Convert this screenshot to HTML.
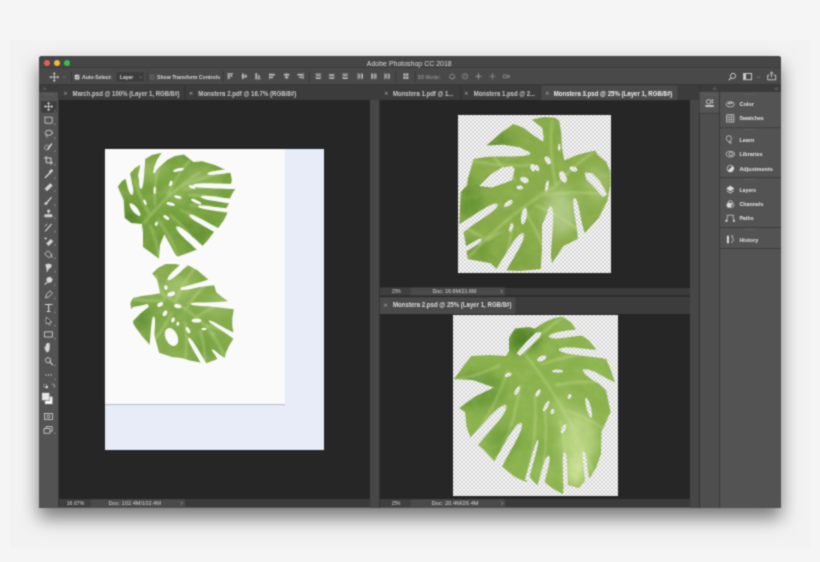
<!DOCTYPE html>
<html><head><meta charset="utf-8">
<style>
*{margin:0;padding:0;box-sizing:border-box}
html,body{width:820px;height:562px;overflow:hidden;background:#f5f5f5;font-family:"Liberation Sans",sans-serif}
.abs{position:absolute}
#bgrect{left:10px;top:40px;width:800px;height:508px;background:#f2f2f2}
#win{left:39px;top:56px;width:742px;height:452px;background:#535353;border-radius:3px 3px 0 0;box-shadow:0 10px 18px rgba(0,0,0,0.5);overflow:hidden}
#title{left:0;top:0;width:742px;height:12px;background:#464646;border-bottom:1px solid #3c3c3c}
#title .t{left:0;top:2px;width:742px;text-align:center;color:#d6d6d6;font-size:7.2px;line-height:9px}
.light{width:5.8px;height:5.8px;border-radius:50%;top:4.4px;box-shadow:0 0 0.6px rgba(0,0,0,0.4)}
#opt{left:0;top:12px;width:742px;height:17px;background:#494949;border-bottom:1.5px solid #383838}
.txt{color:#cfcfcf;font-size:5.6px;line-height:7px;white-space:nowrap}
.sep{width:1px;background:#3a3a3a}
#hdrL{left:0;top:29px;width:20px;height:7px;background:#3b3b3b}
#tools{left:0;top:36px;width:20px;height:415px;background:#535353;border-right:1px solid #3a3a3a}
.doc{background:#262626}
.tabbar{background:#3c3c3c}
.checker{background-color:#f7f7f7;background-image:linear-gradient(45deg,#d5d5d5 25%,transparent 25%,transparent 75%,#d5d5d5 75%),linear-gradient(45deg,#d5d5d5 25%,transparent 25%,transparent 75%,#d5d5d5 75%);background-size:4px 4px;background-position:0 0,2px 2px}
.status{background:#3a3a3a}
</style></head><body>
<svg width="0" height="0" style="position:absolute"><defs><filter id="conv" x="0" y="0" width="100%" height="100%" color-interpolation-filters="sRGB"><feConvolveMatrix order="3" kernelMatrix="1 2 1 2 8 2 1 2 1" divisor="20" edgeMode="duplicate" preserveAlpha="true"/></filter></defs></svg>
<div id="all" class="abs" style="left:0;top:0;width:820px;height:562px;background:#f5f5f5;filter:url(#conv)">
<div id="bgrect" class="abs"></div>
<div id="win" class="abs">
  <div id="title" class="abs">
    <div class="abs light" style="left:4.75px;background:#e2625b"></div>
    <div class="abs light" style="left:15px;background:#efbb40"></div>
    <div class="abs light" style="left:25.3px;background:#3cbf48"></div>
  </div>
  <div id="opt" class="abs"></div>
  <div id="hdrL" class="abs"></div>
  <div id="tools" class="abs"></div>
  <!-- left doc -->
  <div class="abs tabbar" style="left:20px;top:29px;width:321px;height:15px"></div>
  <div class="abs doc" style="left:20px;top:44px;width:311px;height:399.3px"></div>
  <div class="abs status" style="left:20px;top:443.3px;width:311px;height:8px"></div>
  <div class="abs" style="left:331px;top:44px;width:10px;height:408px;background:#474747;border-right:0.8px solid #333"></div>
  <!-- photo -->
  <div class="abs" style="left:66px;top:93px;width:219.3px;height:301.2px;background:#e8ecf9"></div>
  <div class="abs" style="left:66px;top:93px;width:179.8px;height:254.8px;background:#fafafa;box-shadow:0.3px 0.8px 0.6px #bdbdbd"></div>
  <!-- right top doc -->
  <div class="abs tabbar" style="left:341px;top:29px;width:310px;height:15px"></div>
  <div class="abs doc" style="left:341px;top:44px;width:310px;height:187.5px"></div>
  <div class="abs status" style="left:341px;top:231.5px;width:310px;height:8px"></div>
  <div class="abs" style="left:341px;top:239.4px;width:310px;height:1.9px;background:#2c2c2c"></div>
  <div class="abs tabbar" style="left:341px;top:241.3px;width:310px;height:16.7px"></div>
  <div class="abs doc" style="left:341px;top:258px;width:310px;height:185.3px"></div>
  <div class="abs status" style="left:341px;top:443.3px;width:310px;height:8px"></div>
  <div class="abs checker" style="left:419.3px;top:58.6px;width:153px;height:158.3px"></div>
  <div class="abs checker" style="left:414px;top:259.4px;width:164.7px;height:180.5px"></div>
  <!-- right scrollbar + panels -->
  <div class="abs tabbar" style="left:651px;top:29px;width:9px;height:15px"></div>
  <div class="abs" style="left:651px;top:44px;width:8.8px;height:408px;background:#474747"></div>
  <div class="abs" style="left:659.5px;top:29px;width:1px;height:423px;background:#333"></div>
  <div class="abs" style="left:660.5px;top:29px;width:19.5px;height:7px;background:#3b3b3b"></div>
  <div class="abs" style="left:660.5px;top:36px;width:19.5px;height:416px;background:#4e4e4e"></div>
  <div class="abs" style="left:679.8px;top:29px;width:1px;height:423px;background:#3a3a3a"></div>
  <div class="abs" style="left:680.8px;top:29px;width:61.2px;height:7px;background:#3b3b3b"></div>
  <div class="abs" style="left:680.8px;top:36px;width:61.2px;height:416px;background:#535353"></div>
</div>

<svg class="abs" style="left:0;top:0" width="820" height="562" viewBox="0 0 820 562" font-family="Liberation Sans, sans-serif"><defs><filter id="tsoft" x="0" y="0" width="820" height="562" filterUnits="userSpaceOnUse"><feGaussianBlur stdDeviation="0.38"/></filter></defs>
<g><!-- ===== options bar ===== -->
<g fill="none" stroke="#d4d4d4" stroke-width="0.9">
<path d="M54.3 72.8V81.4M50 77.1H58.6"/>
<path d="M53.2 74L54.3 72.6L55.4 74M53.2 80.2L54.3 81.6L55.4 80.2M51.2 76L49.8 77.1L51.2 78.2M57.4 76L58.8 77.1L57.4 78.2" stroke-width="0.8"/>
<path d="M63.1 76.7L64.3 77.9L65.5 76.7" stroke="#a0a0a0" stroke-width="0.6"/>
</g>
<rect x="74.8" y="74.8" width="4.6" height="4.6" rx="0.6" fill="#d6d6d6"/>
<path d="M75.8 77L76.9 78.1L78.5 75.8" stroke="#454545" stroke-width="0.8" fill="none"/>
<rect x="116.5" y="72.3" width="27.5" height="9.5" fill="#3d3d3d"/>
<path d="M139.3 76.7L140.5 77.9L141.7 76.7" stroke="#a0a0a0" stroke-width="0.6" fill="none"/>
<rect x="150.4" y="75.2" width="3.7" height="3.7" rx="0.5" stroke="#8a8a8a" stroke-width="0.6" fill="none"/>
<g fill="#d8d8d8" font-size="5.6" font-weight="bold">
<text x="82" y="79" textLength="30" lengthAdjust="spacingAndGlyphs">Auto-Select:</text>
<text x="119.8" y="79" textLength="13.5" lengthAdjust="spacingAndGlyphs">Layer</text>
<text x="157" y="79" textLength="63" lengthAdjust="spacingAndGlyphs">Show Transform Controls</text>
<text x="417.6" y="79" textLength="23" lengthAdjust="spacingAndGlyphs" fill="#8a8a8a">3D Mode:</text>
</g>
<g fill="#393939">
<rect x="71" y="71" width="0.9" height="11.5"/>
<rect x="146.8" y="71" width="0.9" height="11.5"/>
<rect x="222.8" y="71" width="0.9" height="11.5"/>
<rect x="308.8" y="71" width="0.9" height="11.5"/>
<rect x="395.3" y="71" width="0.9" height="11.5"/>
<rect x="414.8" y="71" width="0.9" height="11.5"/>
</g>
<g fill="#bcbcbd">
<rect x="227.2" y="73.2" width="6" height="0.7"/><rect x="227.79999999999998" y="73.7" width="1.8" height="5.4"/><rect x="230.6" y="73.7" width="1.6" height="3.2"/>
<rect x="241.4" y="75.85000000000001" width="6" height="0.7"/><rect x="242.0" y="73.5" width="1.8" height="5.4"/><rect x="244.8" y="74.60000000000001" width="1.6" height="3.2"/>
<rect x="254.8" y="78.60000000000001" width="6" height="0.7"/><rect x="255.4" y="73.2" width="1.8" height="5.4"/><rect x="258.2" y="75.4" width="1.6" height="3.2"/>
<rect x="269" y="73.2" width="0.7" height="6"/><rect x="269.5" y="73.8" width="5.4" height="1.8"/><rect x="269.5" y="76.60000000000001" width="3.6" height="1.6"/>
<rect x="286.25" y="73.2" width="0.7" height="6"/><rect x="283.90000000000003" y="73.8" width="5.4" height="1.8"/><rect x="284.8" y="76.60000000000001" width="3.6" height="1.6"/>
<rect x="302.9" y="73.2" width="0.7" height="6"/><rect x="297.5" y="73.8" width="5.4" height="1.8"/><rect x="299.3" y="76.60000000000001" width="3.6" height="1.6"/>
<rect x="315.3" y="73.60000000000001" width="6" height="0.7"/><rect x="315.90000000000003" y="74.60000000000001" width="4.8" height="1.2"/><rect x="315.3" y="76.8" width="6" height="0.7"/><rect x="315.90000000000003" y="77.8" width="4.8" height="1.2"/>
<rect x="328.7" y="73.9" width="6" height="0.7"/><rect x="329.3" y="74.9" width="4.8" height="1.2"/><rect x="328.7" y="77.10000000000001" width="6" height="0.7"/><rect x="329.3" y="77.9" width="4.8" height="1.0"/>
<rect x="342.1" y="73.60000000000001" width="6" height="0.7"/><rect x="342.70000000000005" y="74.60000000000001" width="4.8" height="1.2"/><rect x="342.1" y="76.8" width="6" height="0.7"/><rect x="342.70000000000005" y="77.8" width="4.8" height="1.2"/>
<rect x="357.59999999999997" y="73.2" width="0.7" height="6"/><rect x="358.59999999999997" y="73.8" width="1.2" height="4.8"/><rect x="360.8" y="73.2" width="0.7" height="6"/><rect x="361.8" y="73.8" width="1.2" height="4.8"/>
<rect x="371.09999999999997" y="73.2" width="0.7" height="6"/><rect x="372.09999999999997" y="73.8" width="1.2" height="4.8"/><rect x="374.3" y="73.2" width="0.7" height="6"/><rect x="375.3" y="73.8" width="1.2" height="4.8"/>
<rect x="384.4" y="73.2" width="0.7" height="6"/><rect x="385.4" y="73.8" width="1.2" height="4.8"/><rect x="387.6" y="73.2" width="0.7" height="6"/><rect x="388.6" y="73.8" width="1.2" height="4.8"/>
<rect x="403.4" y="73.4" width="2.2" height="2.4"/><rect x="406.2" y="73.4" width="2.2" height="2.4"/><rect x="403.4" y="76.6" width="2.2" height="2.4"/><rect x="406.2" y="76.6" width="2.2" height="2.4"/>
</g>
<g fill="none" stroke="#8a8a8a" stroke-width="0.9">
<circle cx="452.2" cy="76.5" r="2.4"/><path d="M449.5 77.5Q452 80 455 77.5"/>
<circle cx="465.1" cy="76.3" r="2.6"/><path d="M463.8 75.2l1.3 1.3l1.3-1.3"/>
<path d="M478.5 73v6.6M475.2 76.3h6.6"/><circle cx="478.5" cy="76.3" r="1.2"/>
<path d="M492.4 73.3v6M489.4 76.3h6"/>
<path d="M503.2 75h4v2.8h-4zM507.2 76.4l2-1.4v2.8z"/>
</g>
<g fill="none" stroke="#d0d0d0" stroke-width="0.9">
<circle cx="733" cy="75.9" r="2.6"/><path d="M731.1 77.8L728.8 80.1" stroke-width="1.1"/>
<rect x="743.6" y="73.5" width="8" height="6.2"/>
<path d="M757.6 76.6l1.1 1.1l1.1-1.1" stroke="#a8a8a8" stroke-width="0.6"/>
<path d="M769.5 75.2h-1.8v4.6h8v-4.6h-1.8M771.6 77.3v-5.2M769.9 73.7l1.7-1.7l1.7 1.7"/>
</g>
<rect x="744" y="73.9" width="2" height="5.4" fill="#d0d0d0"/>
<!-- ===== title ===== -->
<text x="366.8" y="65.8" font-size="7" fill="#d8d8d8" textLength="84.9" lengthAdjust="spacingAndGlyphs">Adobe Photoshop CC 2018</text>
<!-- ===== tabs ===== -->
<rect x="541.5" y="85.5" width="135.8" height="14.7" fill="#4a4a4a"/>
<rect x="379.8" y="297.4" width="135.6" height="16.6" fill="#4a4a4a"/>
<g fill="#2f2f2f">
  <rect x="184.6" y="85.5" width="0.8" height="14.7"/>
  <rect x="460.3" y="85.5" width="0.8" height="14.7"/>
</g>
<g stroke="#b8b8b8" stroke-width="0.7" fill="none">
  <path d="M64.1 91.9l2.8 2.8M66.9 91.9l-2.8 2.8"/>
  <path d="M189.6 91.9l2.8 2.8M192.4 91.9l-2.8 2.8"/>
  <path d="M384.9 91.9l2.8 2.8M387.7 91.9l-2.8 2.8"/>
  <path d="M464.9 91.9l2.8 2.8M467.7 91.9l-2.8 2.8"/>
  <path d="M545.9 91.9l2.8 2.8M548.7 91.9l-2.8 2.8"/>
  <path d="M384.2 303.7l2.8 2.8M387.0 303.7l-2.8 2.8"/>
</g>
<g font-size="6.4" font-weight="bold" fill="#c8c8c8">
  <text x="72.6" y="95.6" textLength="107" lengthAdjust="spacingAndGlyphs">March.psd @ 100% (Layer 1, RGB/8#)</text>
  <text x="198.3" y="95.6" textLength="97.9" lengthAdjust="spacingAndGlyphs">Monstera 2.pdf @ 16.7% (RGB/8#)</text>
  <text x="393" y="95.6" textLength="60.4" lengthAdjust="spacingAndGlyphs">Monstera 1.pdf @ 1...</text>
  <text x="473.7" y="95.6" textLength="61.3" lengthAdjust="spacingAndGlyphs">Monstera 1.psd @ 2...</text>
  <text x="553.7" y="95.6" textLength="118.7" lengthAdjust="spacingAndGlyphs" fill="#eeeeee">Monstera 3.psd @ 25% (Layer 1, RGB/8#)</text>
  <text x="393" y="307.3" textLength="118.5" lengthAdjust="spacingAndGlyphs" fill="#dddddd">Monstera 2.psd @ 25% (Layer 1, RGB/8#)</text>
</g>

<!-- ===== tools ===== -->
<rect x="41.2" y="101.1" width="15.6" height="11.4" fill="#3e3e3e"/>
<g fill="#a8a8a8">
<path d="M55.4 109.7v1.6h-1.6z"/>
<path d="M55.4 123.4v1.6h-1.6z"/>
<path d="M55.4 136.79999999999998v1.6h-1.6z"/>
<path d="M55.4 150.2v1.6h-1.6z"/>
<path d="M55.4 163.6v1.6h-1.6z"/>
<path d="M55.4 177.0v1.6h-1.6z"/>
<path d="M55.4 190.2v1.6h-1.6z"/>
<path d="M55.4 203.79999999999998v1.6h-1.6z"/>
<path d="M55.4 217.2v1.6h-1.6z"/>
<path d="M55.4 230.6v1.6h-1.6z"/>
<path d="M55.4 244.0v1.6h-1.6z"/>
<path d="M55.4 257.4v1.6h-1.6z"/>
<path d="M55.4 270.59999999999997v1.6h-1.6z"/>
<path d="M55.4 284.0v1.6h-1.6z"/>
<path d="M55.4 297.4v1.6h-1.6z"/>
<path d="M55.4 311.09999999999997v1.6h-1.6z"/>
<path d="M55.4 324.5v1.6h-1.6z"/>
<path d="M55.4 337.59999999999997v1.6h-1.6z"/>
<path d="M55.4 364.2v1.6h-1.6z"/>
<path d="M55.4 378.2v1.6h-1.6z"/><path d="M55.4 432.2v1.6h-1.6z"/>
</g>
<g fill="none" stroke="#d6d6d6" stroke-width="0.85" stroke-linecap="round" stroke-linejoin="round">
<path d="M48.6 102.5v8M44.6 106.5h8M47.6 103.5l1-1.1l1 1.1M47.6 109.5l1 1.1l1-1.1M45.6 105.5l-1.1 1l1.1 1M51.6 105.5l1.1 1l-1.1 1"/>
<rect x="45.0" y="117.2" width="7.2" height="6" stroke-dasharray="1.2 0.9"/>
<ellipse cx="48.9" cy="132.79999999999998" rx="3.6" ry="2.6"/><path d="M46.2 134.6q-0.6 2.4 1 3"/>
<circle cx="47.0" cy="147.6" r="2.4" stroke-dasharray="1 0.8" stroke-width="0.7"/><path d="M48.0 148.6l3.6-4.6" stroke-width="1.5"/>
<path d="M46.2 156.4v6.4h6.4M44.6 158.0h6.4v6.4" stroke-width="1"/>
<path d="M45.4 177.4l4.6-4.6" stroke-width="1.4"/><path d="M49.4 171.4l2-2l1.4 1.4l-2 2z" fill="#d6d6d6"/>
<path d="M45.2 188.6l5-5l2 2l-5 5z" fill="#d6d6d6"/>
<path d="M45.6 204.0l5.6-6.4" stroke-width="1.3"/><circle cx="45.800000000000004" cy="203.6" r="1" fill="#d6d6d6"/>
<path d="M48.6 210.4v3M45.2 214.8h6.8v2h-6.8z" fill="#d6d6d6"/><circle cx="48.6" cy="211.0" r="1.1" fill="#d6d6d6"/>
<path d="M45.6 230.8l5.6-6.4" stroke-width="1.2"/><path d="M45.0 225.8l2-1.4"/>
<path d="M46.800000000000004 243.4l4-4l2 2l-4 4z" fill="#d6d6d6"/><circle cx="45.6" cy="238.4" r="0.7" fill="#d6d6d6"/>
<path d="M45.0 253.6l3-3l4 4l-3 3z"/><path d="M51.0 254.6q1.4 1.6 1 3" />
<path d="M45.6 264.79999999999995q3-1.6 5.6 0q0.6 3-2.6 3.6l-1.6 3.4" fill="#d6d6d6"/>
<circle cx="49.4" cy="279.8" r="2.6" fill="#d6d6d6"/><path d="M47.6 281.8l-2.6 2.6" stroke-width="1.1"/>
<path d="M45.6 297.59999999999997l1-3.4l3.4-3.4l2.4 2.4l-3.4 3.4z"/>
<path d="M45.2 304.5h6.8M48.6 304.5v7M47.2 311.5h2.8" stroke-width="1.1"/>
<path d="M46.2 317.5v6.6l1.6-1.6l1.4 2.6l1-0.4l-1.2-2.6h2.4z" fill="#2a2a2a" stroke-width="0.7"/>
<rect x="44.800000000000004" y="331.79999999999995" width="7.6" height="5.2"/>
<path d="M46.0 351.20000000000005l-1.2-3.2v-1.4l1.2 0.6v-3l0.8 0v2.4v-3.2h0.9v3v-3.4h0.9v3.4v-2.8h0.9v4.6q0 3.2-2 4z" fill="#d6d6d6" stroke-width="0.4"/>
<circle cx="48.0" cy="360.2" r="2.6"/><path d="M50.0 362.2l2.4 2.4" stroke-width="1.2"/>
</g>
<g fill="#d6d6d6"><circle cx="46.0" cy="375" r="0.7"/><circle cx="48.6" cy="375" r="0.7"/><circle cx="51.2" cy="375" r="0.7"/></g>
<rect x="44" y="384.3" width="2.6" height="2.6" fill="#1a1a1a" stroke="#ddd" stroke-width="0.5"/><rect x="45.6" y="385.9" width="2.2" height="2.2" fill="#eee"/>
<path d="M51.6 384.2h2q0.8 0 0.8 0.8v2" stroke="#ccc" fill="none" stroke-width="0.6"/><path d="M53.6 386.4l0.8 1.2l0.8-1.2" fill="#ccc"/>
<rect x="44.8" y="396.2" width="8" height="8" fill="#fdfdfd" stroke="#535353" stroke-width="0.6"/>
<rect x="41.8" y="392.6" width="8" height="8" fill="#e6e6e6" stroke="#535353" stroke-width="0.6"/>
<g fill="none" stroke="#d6d6d6" stroke-width="0.8"><rect x="44.4" y="413.4" width="8" height="6"/><circle cx="48.4" cy="416.4" r="1.5"/>
<rect x="44" y="428.6" width="6" height="4.6"/><path d="M46 428.6v-2h6.2v4.6h-2"/></g>
<!-- ===== right panel ===== -->
<g fill="#3d3d3d"><rect x="699.5" y="91.8" width="19.3" height="21.2" fill="#555"/></g>
<rect x="719.8" y="127.3" width="61.2" height="0.9" fill="#3c3c3c"/>
<rect x="719.8" y="177.2" width="61.2" height="0.9" fill="#3c3c3c"/>
<rect x="719.8" y="227.0" width="61.2" height="0.9" fill="#3c3c3c"/>
<rect x="719.8" y="248.0" width="61.2" height="0.9" fill="#3c3c3c"/>
<rect x="699.5" y="112.8" width="19.3" height="0.9" fill="#3c3c3c"/>
<g fill="#6a6a6a">
<rect x="745" y="94.0" width="10" height="0.5"/>
<rect x="745" y="129.6" width="10" height="0.5"/>
<rect x="745" y="179.4" width="10" height="0.5"/>
<rect x="745" y="229.3" width="10" height="0.5"/>
<rect x="705" y="94" width="10" height="0.5"/>
</g>
<g fill="none" stroke="#9a9a9a" stroke-width="0.55">
<path d="M714.4 87.6l-1.1 1.1l1.1 1.1M716 87.6l-1.1 1.1l1.1 1.1"/>
<path d="M776.2 87.6l-1.1 1.1l1.1 1.1M777.8 87.6l-1.1 1.1l1.1 1.1"/>
<path d="M43 87.6l1.1 1.1l-1.1 1.1M44.6 87.6l1.1 1.1l-1.1 1.1"/>
</g>
<g font-size="5.5" font-weight="bold" fill="#e2e2e2">
<text x="739.4" y="106.0" textLength="14.5" lengthAdjust="spacingAndGlyphs">Color</text>
<text x="739.4" y="120.4" textLength="24.4" lengthAdjust="spacingAndGlyphs">Swatches</text>
<text x="739.4" y="141.7" textLength="15" lengthAdjust="spacingAndGlyphs">Learn</text>
<text x="739.4" y="156.1" textLength="23.2" lengthAdjust="spacingAndGlyphs">Libraries</text>
<text x="739.4" y="170.5" textLength="33.4" lengthAdjust="spacingAndGlyphs">Adjustments</text>
<text x="739.4" y="191.7" textLength="16.9" lengthAdjust="spacingAndGlyphs">Layers</text>
<text x="739.4" y="206.0" textLength="24.2" lengthAdjust="spacingAndGlyphs">Channels</text>
<text x="739.4" y="220.2" textLength="14.2" lengthAdjust="spacingAndGlyphs">Paths</text>
<text x="739.4" y="241.5" textLength="19.0" lengthAdjust="spacingAndGlyphs">History</text>
</g>
<g fill="none" stroke="#dcdcdc" stroke-width="0.7">
<ellipse cx="730.3" cy="104.3" rx="4" ry="2.6"/><circle cx="729.3" cy="103.4" r="0.7" fill="#dcdcdc"/><circle cx="731.5" cy="103.0" r="0.6" fill="#dcdcdc"/>
<rect x="726.6999999999999" y="114.80000000000001" width="7.2" height="7.2"/><path d="M729.0999999999999 114.80000000000001v7.2M731.5 114.80000000000001v7.2M726.6999999999999 117.2h7.2M726.6999999999999 119.60000000000001h7.2" stroke-width="0.5"/>
<path d="M728.9 141.89999999999998q-2.6-1.4-2.6-3.6a2.6 2.6 0 0 1 5.2 0q0 2.2-2.6 3.6M729.3 143.1h2" stroke-width="0.7"/>
<path d="M728.9 142.1h2.6" />
<ellipse cx="730.3" cy="154.1" rx="4.2" ry="2.8"/><ellipse cx="730.9" cy="154.1" rx="2.2" ry="1.6"/>
<circle cx="730.3" cy="168.5" r="3.2"/><path d="M732.5999999999999 166.2A3.2 3.2 0 0 1 728.0 170.8z" fill="#dcdcdc"/>
<path d="M726.6999999999999 188.5l3.6-2.4l3.6 2.4l-3.6 2.4z" fill="#dcdcdc"/><path d="M726.6999999999999 190.7l3.6 2.4l3.6-2.4" stroke-width="0.9"/>
<circle cx="729.0999999999999" cy="205.2" r="2.2" fill="#dcdcdc"/><circle cx="731.6999999999999" cy="205.2" r="2.2"/><circle cx="730.3" cy="202.8" r="2.2"/>
<path d="M726.5 215.6q3.8-1.2 7.6 0M727.6999999999999 216.2l-1 4.4M732.9 216.2l1 4.4"/><rect x="725.9" y="220.2" width="1.2" height="1.2" fill="#dcdcdc"/><rect x="733.3" y="220.2" width="1.2" height="1.2" fill="#dcdcdc"/>
<rect x="726.9" y="235.7" width="2" height="7.6" fill="#dcdcdc" stroke="none"/><path d="M730.9 235.9h2q-1.6 2 0.4 3.2q0.6 2.4-2.2 3.6"/>
</g>
<g fill="#dcdcdc"><circle cx="708.6" cy="101.8" r="2.2" fill="none" stroke="#dcdcdc" stroke-width="0.8"/><rect x="711.6" y="99.4" width="1.6" height="1.4"/><rect x="711.6" y="101.8" width="1.6" height="1.4"/><rect x="705.4" y="105.2" width="8.4" height="1.6"/></g>
<rect id="grip-tools" x="44" y="94.2" width="10" height="0.5" fill="#6a6a6a"/>
<!-- ===== status bars ===== -->
<rect x="59.5" y="499.3" width="31.5" height="7.9" fill="#3f3f3f"/>
<rect x="91.0" y="499.3" width="94.0" height="7.9" fill="#4a4a4a"/>
<text x="66.7" y="504.90000000000003" font-size="5.2" fill="#d0d0d0" textLength="17.6" lengthAdjust="spacingAndGlyphs">16.67%</text>
<text x="108.4" y="504.90000000000003" font-size="5.2" fill="#d0d0d0" textLength="52.6" lengthAdjust="spacingAndGlyphs">Doc: 102.4M/102.4M</text>
<path d="M181.0 501.6l1.5 1.6l-1.5 1.6" stroke="#bbb" stroke-width="0.6" fill="none"/>
<rect x="380" y="287.5" width="30.5" height="7.9" fill="#3f3f3f"/>
<rect x="410.5" y="287.5" width="94.5" height="7.9" fill="#4a4a4a"/>
<text x="392" y="293.1" font-size="5.2" fill="#d0d0d0" textLength="8.6" lengthAdjust="spacingAndGlyphs">25%</text>
<text x="432.4" y="293.1" font-size="5.2" fill="#d0d0d0" textLength="44.2" lengthAdjust="spacingAndGlyphs">Doc: 16.6M/21.6M</text>
<path d="M500.90000000000003 289.8l1.5 1.6l-1.5 1.6" stroke="#bbb" stroke-width="0.6" fill="none"/>
<rect x="380" y="499.3" width="30.5" height="7.9" fill="#3f3f3f"/>
<rect x="410.5" y="499.3" width="94.5" height="7.9" fill="#4a4a4a"/>
<text x="391.8" y="504.90000000000003" font-size="5.2" fill="#d0d0d0" textLength="8.6" lengthAdjust="spacingAndGlyphs">25%</text>
<text x="431.4" y="504.90000000000003" font-size="5.2" fill="#d0d0d0" textLength="47.3" lengthAdjust="spacingAndGlyphs">Doc: 20.4M/26.4M</text>
<path d="M501.3 501.6l1.5 1.6l-1.5 1.6" stroke="#bbb" stroke-width="0.6" fill="none"/></g>
<defs>
<filter id="bl" x="-50%" y="-50%" width="200%" height="200%"><feGaussianBlur stdDeviation="6"/></filter>
<filter id="bl2" x="-50%" y="-50%" width="200%" height="200%"><feGaussianBlur stdDeviation="3"/></filter>
<filter id="tex" x="0" y="0" width="820" height="562" filterUnits="userSpaceOnUse"><feTurbulence type="fractalNoise" baseFrequency="0.09 0.06" numOctaves="3" seed="7"/><feColorMatrix type="matrix" values="0 0 0 0 0.30  0 0 0 0 0.45  0 0 0 0 0.12  1.8 0 0 0 -0.72"/></filter>
<filter id="tex2" x="0" y="0" width="820" height="562" filterUnits="userSpaceOnUse"><feTurbulence type="fractalNoise" baseFrequency="0.07 0.1" numOctaves="3" seed="21"/><feColorMatrix type="matrix" values="0 0 0 0 0.82  0 0 0 0 0.88  0 0 0 0 0.50  1.8 0 0 0 -0.75"/></filter>
<filter id="bl3" x="-20%" y="-20%" width="140%" height="140%"><feGaussianBlur stdDeviation="1.0"/></filter>
<filter id="soft" x="-5%" y="-5%" width="110%" height="110%"><feGaussianBlur stdDeviation="0.45"/></filter>
<mask id="m1" maskUnits="userSpaceOnUse" x="0" y="0" width="820" height="562"><path d="M117.9 186.4 L122.0 181.0 L127.0 177.9 L132.0 194.0 L130.5 178.0 L129.6 174.1 L135.0 168.0 L141.3 164.0 L138.1 174.7 L140.3 188.6 L143.0 183.2 L144.0 159.7 L152.0 155.0 L161.6 152.8 L157.0 160.0 L154.2 167.2 L153.6 173.6 L156.8 169.3 L167.5 159.7 L175.0 156.0 L183.9 154.6 L193.5 161.9 L202.0 161.3 L214.8 165.1 L226.0 169.9 L207.4 173.8 L230.3 172.0 L231.9 180.0 L230.8 184.8 L208.4 185.6 L236.2 187.5 L232.0 194.0 L229.5 199.0 L210.6 197.0 L229.2 203.2 L225.5 209.6 L211.6 206.4 L228.2 211.2 L224.0 220.0 L218.0 228.3 L189.2 215.0 L214.3 231.5 L208.0 240.0 L201.0 247.5 L176.4 226.7 L199.3 248.6 L188.0 253.0 L178.0 256.6 L176.0 255.5 L164.3 234.2 L160.0 245.0 L159.0 258.7 L150.0 252.0 L143.0 247.0 L143.0 232.0 L141.9 224.0 L131.2 222.9 L124.8 218.1 L123.7 200.0 L120.0 192.0Z" fill="#fff"/>
<ellipse cx="135" cy="209.5" rx="2.6" ry="8" transform="rotate(-40 135 209.5)" fill="#000"/>
<ellipse cx="145" cy="202.3" rx="1.3" ry="3" transform="rotate(-25 145 202.3)" fill="#000"/>
<ellipse cx="170.7" cy="204" rx="4.3" ry="1.6" transform="rotate(15 170.7 204)" fill="#000"/>
<ellipse cx="166.3" cy="217.5" rx="3.4" ry="1.6" transform="rotate(35 166.3 217.5)" fill="#000"/>
<ellipse cx="156.3" cy="223.8" rx="1.4" ry="2.2" transform="rotate(20 156.3 223.8)" fill="#000"/>
<ellipse cx="154.7" cy="190.2" rx="1.1" ry="3.8" transform="rotate(0 154.7 190.2)" fill="#000"/>
<ellipse cx="170.7" cy="183.7" rx="1.4" ry="2.8" transform="rotate(30 170.7 183.7)" fill="#000"/>
<ellipse cx="178.5" cy="169.8" rx="5.5" ry="1.5" transform="rotate(-15 178.5 169.8)" fill="#000"/>
<ellipse cx="177.9" cy="197.1" rx="3.8" ry="1.4" transform="rotate(15 177.9 197.1)" fill="#000"/>
<ellipse cx="192.2" cy="186.9" rx="3.5" ry="1.5" transform="rotate(20 192.2 186.9)" fill="#000"/>
<ellipse cx="196.2" cy="201.6" rx="5.8" ry="1.6" transform="rotate(25 196.2 201.6)" fill="#000"/>
<ellipse cx="171" cy="183" rx="1.2" ry="2.4" transform="rotate(0 171 183)" fill="#000"/>
<path d="M129.9 172.6 L130.3 174.7 L130.8 176.7 L131.2 178.8 L131.6 180.8 L132.0 182.9 L132.4 184.9 L132.9 187.0 L133.2 189.1 L133.3 191.2 L133.0 193.4 L130.7 194.6 L131.3 195.0 L132.0 195.0 L132.6 194.7 L133.0 194.1 L130.4 194.0 L129.2 192.1 L128.4 190.1 L127.8 188.1 L127.3 186.1 L126.8 184.0 L126.4 182.0 L125.9 180.0 L125.4 177.9 L124.9 175.9 L124.4 173.9Z" fill="#000"/>
<path d="M145.3 159.0 L145.1 161.9 L144.9 164.8 L144.6 167.7 L144.4 170.6 L144.2 173.5 L144.0 176.4 L143.7 179.3 L143.4 182.2 L142.9 185.0 L142.1 187.9 L139.8 188.4 L140.2 188.8 L140.8 189.0 L141.4 188.9 L141.9 188.5 L139.7 187.7 L139.2 184.8 L139.1 181.9 L139.2 179.0 L139.4 176.1 L139.5 173.2 L139.7 170.3 L139.9 167.4 L140.1 164.5 L140.2 161.6 L140.4 158.7Z" fill="#000"/>
<path d="M158.0 164.9 L157.7 165.8 L157.4 166.6 L157.1 167.4 L156.8 168.3 L156.5 169.1 L156.3 169.9 L156.0 170.8 L155.6 171.6 L155.2 172.4 L154.6 173.1 L153.4 173.0 L153.5 173.3 L153.8 173.5 L154.1 173.5 L154.4 173.4 L153.4 172.7 L153.4 171.8 L153.5 170.9 L153.7 170.0 L154.0 169.2 L154.2 168.3 L154.5 167.5 L154.8 166.7 L155.0 165.8 L155.3 165.0 L155.6 164.1Z" fill="#000"/>
<path d="M231.7 172.6 L229.4 172.9 L227.1 173.1 L224.8 173.4 L222.5 173.7 L220.2 174.0 L217.9 174.3 L215.6 174.6 L213.2 174.8 L210.9 174.9 L208.5 174.7 L207.8 172.9 L207.4 173.3 L207.4 173.8 L207.6 174.3 L208.0 174.6 L208.2 172.7 L210.5 171.8 L212.7 171.3 L215.0 170.9 L217.3 170.5 L219.7 170.2 L222.0 169.8 L224.3 169.5 L226.6 169.2 L228.9 168.8 L231.2 168.5Z" fill="#000"/>
<path d="M236.7 189.3 L232.4 189.1 L228.2 188.9 L223.9 188.8 L219.7 188.6 L215.4 188.4 L211.2 188.2 L206.9 188.1 L202.7 187.8 L198.4 187.4 L194.2 186.5 L193.7 184.1 L193.2 184.6 L193.0 185.2 L193.1 185.8 L193.6 186.3 L194.3 184.0 L198.6 183.4 L202.8 183.2 L207.1 183.2 L211.3 183.3 L215.6 183.4 L219.8 183.6 L224.1 183.7 L228.3 183.8 L232.6 183.9 L236.8 184.0Z" fill="#000"/>
<path d="M233.3 203.8 L230.1 203.4 L227.0 202.9 L223.8 202.4 L220.7 201.9 L217.5 201.4 L214.4 200.9 L211.2 200.5 L208.1 199.9 L205.0 199.2 L201.9 198.1 L201.7 195.9 L201.2 196.3 L201.0 196.8 L201.0 197.4 L201.4 197.9 L202.3 195.8 L205.5 195.7 L208.7 195.9 L211.9 196.2 L215.0 196.6 L218.2 197.1 L221.3 197.5 L224.5 197.9 L227.6 198.3 L230.8 198.8 L233.9 199.2Z" fill="#000"/>
<path d="M230.2 213.0 L227.0 212.5 L223.9 212.1 L220.7 211.6 L217.6 211.2 L214.4 210.7 L211.3 210.3 L208.2 209.8 L205.0 209.3 L201.9 208.6 L198.8 207.6 L198.6 205.7 L198.2 206.0 L198.0 206.5 L198.0 207.0 L198.4 207.4 L199.1 205.6 L202.3 205.5 L205.5 205.7 L208.7 206.1 L211.8 206.5 L215.0 206.9 L218.1 207.3 L221.3 207.7 L224.4 208.1 L227.6 208.5 L230.7 208.9Z" fill="#000"/>
<path d="M218.0 234.1 L215.1 232.5 L212.2 230.8 L209.3 229.2 L206.5 227.5 L203.6 225.9 L200.7 224.2 L197.8 222.6 L195.0 220.9 L192.2 219.0 L189.7 216.7 L190.3 214.3 L189.6 214.5 L189.2 215.0 L189.0 215.6 L189.2 216.3 L190.9 214.5 L194.2 215.5 L197.2 216.9 L200.2 218.4 L203.1 220.0 L206.0 221.6 L208.9 223.2 L211.8 224.8 L214.7 226.3 L217.7 227.9 L220.6 229.5Z" fill="#000"/>
<path d="M200.8 253.4 L198.2 251.1 L195.7 248.8 L193.2 246.4 L190.7 244.1 L188.2 241.8 L185.6 239.5 L183.1 237.1 L180.7 234.7 L178.4 232.1 L176.5 229.1 L178.0 226.2 L177.1 226.2 L176.4 226.7 L176.0 227.5 L176.0 228.4 L178.8 226.6 L182.0 228.2 L184.8 230.2 L187.5 232.3 L190.0 234.6 L192.6 236.9 L195.2 239.1 L197.7 241.4 L200.3 243.7 L202.9 245.9 L205.5 248.2Z" fill="#000"/>
</mask>
<mask id="m2" maskUnits="userSpaceOnUse" x="0" y="0" width="820" height="562"><path d="M152.2 273.5 L158.0 268.0 L165.6 263.9 L175.0 264.0 L182.6 265.5 L172.0 273.0 L167.7 280.0 L177.0 274.0 L184.5 266.2 L186.4 264.4 L197.0 270.0 L208.3 279.4 L182.1 289.0 L214.2 285.2 L216.3 292.2 L222.0 297.0 L228.0 301.2 L190.7 303.9 L233.9 309.2 L232.3 318.0 L232.3 326.0 L233.4 332.4 L208.8 320.7 L233.4 338.8 L229.0 346.0 L225.9 352.7 L224.8 358.0 L212.0 349.5 L217.4 359.1 L205.6 363.4 L188.5 337.8 L201.4 362.8 L190.0 360.5 L181.6 358.0 L172.0 357.0 L159.2 352.7 L153.3 331.4 L153.8 316.4 L150.1 345.2 L142.0 336.0 L135.7 327.6 L133.5 323.9 L131.4 310.0 L130.3 303.0 L133.0 298.0 L142.0 296.0 L151.7 294.8 L160.2 293.2 L157.0 279.4Z" fill="#fff"/>
<ellipse cx="165.9" cy="287.6" rx="1.8" ry="2.4" transform="rotate(0 165.9 287.6)" fill="#000"/>
<ellipse cx="171.2" cy="294" rx="4" ry="2.2" transform="rotate(-20 171.2 294)" fill="#000"/>
<ellipse cx="182.7" cy="288.4" rx="2.2" ry="1.5" transform="rotate(0 182.7 288.4)" fill="#000"/>
<ellipse cx="160.2" cy="304.4" rx="3.2" ry="2.0" transform="rotate(-30 160.2 304.4)" fill="#000"/>
<ellipse cx="177.8" cy="306.1" rx="3.8" ry="1.9" transform="rotate(10 177.8 306.1)" fill="#000"/>
<ellipse cx="165" cy="313.3" rx="2.0" ry="3" transform="rotate(30 165 313.3)" fill="#000"/>
<ellipse cx="173" cy="320" rx="1.7" ry="2.6" transform="rotate(20 173 320)" fill="#000"/>
<ellipse cx="177.8" cy="323.8" rx="1.4" ry="2" transform="rotate(0 177.8 323.8)" fill="#000"/>
<ellipse cx="196.5" cy="320.6" rx="4.8" ry="2" transform="rotate(0 196.5 320.6)" fill="#000"/>
<ellipse cx="204" cy="329" rx="2.6" ry="1.3" transform="rotate(0 204 329)" fill="#000"/>
<ellipse cx="188" cy="330.2" rx="1.7" ry="3.4" transform="rotate(-30 188 330.2)" fill="#000"/>
<ellipse cx="171.5" cy="337" rx="6" ry="9.5" transform="rotate(-25 171.5 337)" fill="#000"/>
<path d="M128.0 313.0 L133.0 307.0 L141.0 305.5 L147.5 304.0 L149.0 306.5 L141.0 313.0 L133.0 321.0 L128.0 321.0Z" fill="#000"/>
<path d="M188.4 264.8 L186.6 266.4 L184.8 268.0 L183.0 269.6 L181.2 271.2 L179.4 272.9 L177.6 274.5 L175.9 276.1 L174.0 277.6 L172.0 279.0 L169.7 280.1 L167.4 278.6 L167.3 279.4 L167.7 280.0 L168.3 280.4 L169.0 280.4 L167.8 278.0 L169.0 275.8 L170.5 273.9 L172.2 272.1 L173.9 270.5 L175.7 268.8 L177.4 267.2 L179.1 265.5 L180.9 263.8 L182.6 262.2 L184.4 260.5Z" fill="#000"/>
<path d="M215.1 283.4 L211.9 284.2 L208.8 284.9 L205.7 285.6 L202.5 286.4 L199.4 287.1 L196.2 287.8 L193.1 288.6 L189.9 289.2 L186.7 289.7 L183.5 289.8 L182.4 287.9 L182.1 288.4 L182.1 289.0 L182.4 289.5 L182.9 289.8 L182.9 287.6 L185.9 286.3 L189.0 285.2 L192.1 284.4 L195.2 283.6 L198.3 282.8 L201.5 282.0 L204.6 281.2 L207.7 280.4 L210.8 279.7 L214.0 278.9Z" fill="#000"/>
<path d="M234.4 307.1 L230.1 307.0 L225.9 306.9 L221.6 306.7 L217.3 306.6 L213.0 306.4 L208.7 306.3 L204.5 306.2 L200.2 305.9 L195.9 305.6 L191.7 304.9 L191.2 303.0 L190.8 303.4 L190.7 303.9 L190.8 304.4 L191.2 304.8 L191.7 302.9 L196.0 302.5 L200.3 302.4 L204.6 302.4 L208.9 302.5 L213.1 302.6 L217.4 302.7 L221.7 302.8 L226.0 302.9 L230.3 303.0 L234.5 303.0Z" fill="#000"/>
<path d="M235.0 338.3 L232.3 336.7 L229.7 335.1 L227.1 333.5 L224.5 331.9 L221.8 330.4 L219.2 328.8 L216.6 327.2 L214.0 325.6 L211.5 323.8 L209.1 321.9 L209.5 320.3 L209.1 320.4 L208.8 320.7 L208.7 321.1 L208.8 321.6 L210.0 320.4 L212.8 321.5 L215.6 322.9 L218.3 324.4 L220.9 325.9 L223.6 327.5 L226.2 329.0 L228.9 330.5 L231.5 332.1 L234.1 333.6 L236.8 335.2Z" fill="#000"/>
<path d="M222.2 361.8 L221.2 360.7 L220.1 359.6 L219.0 358.5 L218.0 357.4 L216.9 356.4 L215.8 355.3 L214.8 354.2 L213.8 353.0 L212.8 351.8 L212.0 350.5 L212.7 349.3 L212.3 349.3 L212.0 349.5 L211.8 349.8 L211.8 350.2 L213.0 349.5 L214.3 350.3 L215.5 351.3 L216.7 352.3 L217.8 353.3 L218.9 354.4 L219.9 355.5 L221.0 356.5 L222.1 357.6 L223.2 358.7 L224.3 359.7Z" fill="#000"/>
<path d="M203.3 367.3 L201.7 364.6 L200.1 361.8 L198.5 359.1 L196.9 356.3 L195.3 353.6 L193.7 350.8 L192.1 348.1 L190.6 345.3 L189.2 342.4 L188.1 339.4 L189.6 337.8 L189.1 337.6 L188.5 337.8 L188.1 338.2 L187.9 338.8 L190.1 338.2 L192.2 340.6 L194.1 343.2 L195.8 345.9 L197.5 348.6 L199.1 351.3 L200.8 354.0 L202.4 356.8 L204.1 359.5 L205.7 362.2 L207.4 364.9Z" fill="#000"/>
<path d="M149.2 350.3 L149.5 347.0 L149.7 343.7 L150.0 340.4 L150.3 337.1 L150.6 333.8 L150.8 330.5 L151.1 327.2 L151.5 323.9 L151.9 320.6 L152.7 317.3 L154.6 316.9 L154.3 316.6 L153.8 316.4 L153.3 316.5 L152.9 316.8 L154.7 317.5 L155.0 320.8 L155.0 324.1 L154.9 327.4 L154.6 330.8 L154.4 334.1 L154.2 337.4 L154.0 340.7 L153.7 344.0 L153.5 347.3 L153.3 350.6Z" fill="#000"/>
</mask>
<mask id="m3" maskUnits="userSpaceOnUse" x="0" y="0" width="820" height="562"><path d="M486.3 145.5 L502.0 131.9 L513.4 124.1 L523.3 127.7 L531.6 134.0 L542.8 141.8 L543.8 138.0 L542.3 127.8 L531.6 119.8 L543.5 117.0 L555.0 117.7 L559.2 120.5 L561.3 133.4 L562.0 147.6 L564.2 160.4 L577.7 154.7 L594.8 150.4 L597.6 154.7 L606.2 161.8 L610.4 171.8 L610.4 185.0 L609.0 192.0 L607.6 200.5 L599.0 217.6 L584.8 233.3 L574.5 198.0 L577.7 220.5 L577.7 239.0 L563.5 246.1 L552.0 263.2 L547.8 234.7 L550.7 206.2 L542.0 225.0 L542.0 250.0 L540.7 268.9 L520.0 271.0 L503.4 270.3 L523.3 233.3 L497.7 270.3 L490.6 263.2 L467.8 258.9 L466.4 250.4 L482.0 239.0 L466.4 247.5 L463.5 231.9 L481.0 219.0 L497.7 204.1 L472.0 220.5 L459.3 224.7 L460.7 192.0 L467.1 185.0 L467.8 178.9 L470.7 169.0 L473.5 159.0 L492.0 156.1 L509.0 149.7 L530.4 153.3 L520.5 147.6 L503.4 144.7Z" fill="#fff"/>
<path d="M514.8 168.9 L512.0 166.0 L502.0 167.5 L490.6 174.6 L479.2 186.0 L492.0 187.4 L512.0 180.3Z" fill="#000"/>
<ellipse cx="524.4" cy="180" rx="4.4" ry="2.8" transform="rotate(20 524.4 180)" fill="#000"/>
<ellipse cx="519.7" cy="187.5" rx="3.3" ry="2" transform="rotate(10 519.7 187.5)" fill="#000"/>
<ellipse cx="533" cy="167.5" rx="2.6" ry="3.8" transform="rotate(-20 533 167.5)" fill="#000"/>
<ellipse cx="547.8" cy="160.4" rx="2.6" ry="4.4" transform="rotate(-30 547.8 160.4)" fill="#000"/>
<ellipse cx="559.2" cy="147.5" rx="1.3" ry="3.5" transform="rotate(0 559.2 147.5)" fill="#000"/>
<ellipse cx="573.5" cy="169" rx="4" ry="2.3" transform="rotate(20 573.5 169)" fill="#000"/>
<ellipse cx="563" cy="176.8" rx="3.2" ry="6.2" transform="rotate(-25 563 176.8)" fill="#000"/>
<path d="M584.8 172.5 L592.0 173.0 L600.0 181.0 L607.0 194.0 L603.0 197.0 L594.0 187.0 L586.0 179.0Z" fill="#000"/>
<ellipse cx="537" cy="168" rx="1.8" ry="3.4" transform="rotate(-30 537 168)" fill="#000"/>
<ellipse cx="547" cy="186" rx="1.6" ry="5.5" transform="rotate(10 547 186)" fill="#000"/>
<ellipse cx="508.4" cy="203.4" rx="4.8" ry="2.4" transform="rotate(-35 508.4 203.4)" fill="#000"/>
<ellipse cx="524" cy="216" rx="2.8" ry="8.5" transform="rotate(10 524 216)" fill="#000"/>
<ellipse cx="511.2" cy="227.6" rx="1.7" ry="4.2" transform="rotate(15 511.2 227.6)" fill="#000"/>
<path d="M475.9 147.1 L481.2 147.4 L486.5 147.7 L491.8 148.0 L497.1 148.3 L502.4 148.6 L507.7 148.9 L512.9 149.2 L518.2 149.7 L523.5 150.4 L528.8 151.5 L529.5 154.8 L530.2 154.2 L530.4 153.3 L530.2 152.4 L529.6 151.8 L528.7 155.0 L523.4 155.9 L518.1 156.3 L512.8 156.5 L507.5 156.5 L502.2 156.5 L496.9 156.6 L491.6 156.6 L486.3 156.6 L481.0 156.7 L475.7 156.7Z" fill="#000"/>
<path d="M578.7 240.4 L578.0 236.3 L577.4 232.2 L576.7 228.2 L576.1 224.1 L575.4 220.1 L574.8 216.0 L574.1 212.0 L573.6 207.9 L573.3 203.8 L573.3 199.6 L575.8 198.5 L575.2 198.0 L574.5 198.0 L573.8 198.3 L573.4 198.9 L576.1 199.1 L577.6 203.1 L578.6 207.0 L579.5 211.1 L580.2 215.1 L581.0 219.1 L581.7 223.2 L582.4 227.2 L583.2 231.3 L583.9 235.3 L584.6 239.3Z" fill="#000"/>
<path d="M541.6 270.1 L542.1 263.9 L542.6 257.7 L543.2 251.5 L543.7 245.2 L544.2 239.0 L544.8 232.8 L545.3 226.6 L546.0 220.3 L547.0 214.1 L548.6 208.0 L552.4 207.3 L551.7 206.5 L550.7 206.2 L549.7 206.4 L548.9 207.0 L552.5 208.3 L553.1 214.6 L553.1 220.9 L552.8 227.1 L552.4 233.4 L552.0 239.6 L551.5 245.8 L551.1 252.1 L550.6 258.3 L550.2 264.5 L549.7 270.8Z" fill="#000"/>
<path d="M494.0 272.6 L496.5 268.7 L498.9 264.7 L501.4 260.8 L503.9 256.8 L506.3 252.9 L508.8 248.9 L511.2 244.9 L513.8 241.1 L516.7 237.4 L520.2 234.0 L524.4 235.3 L524.1 234.1 L523.3 233.3 L522.2 232.9 L521.0 233.2 L524.1 236.4 L522.7 241.0 L520.8 245.3 L518.6 249.4 L516.2 253.4 L513.9 257.4 L511.5 261.4 L509.1 265.5 L506.8 269.5 L504.4 273.5 L502.0 277.5Z" fill="#000"/>
<path d="M461.7 248.9 L463.5 247.8 L465.3 246.7 L467.2 245.6 L469.0 244.5 L470.8 243.4 L472.6 242.3 L474.5 241.2 L476.3 240.1 L478.3 239.2 L480.4 238.6 L482.1 240.1 L482.2 239.6 L482.0 239.0 L481.6 238.6 L481.0 238.5 L481.7 240.6 L480.2 242.2 L478.5 243.6 L476.8 244.8 L475.0 246.0 L473.2 247.1 L471.4 248.3 L469.6 249.4 L467.8 250.6 L466.0 251.8 L464.2 252.9Z" fill="#000"/>
<path d="M455.0 227.0 L458.9 224.5 L462.8 222.0 L466.7 219.5 L470.6 217.1 L474.5 214.6 L478.4 212.1 L482.4 209.6 L486.4 207.2 L490.5 205.1 L495.0 203.5 L497.8 206.1 L498.1 205.1 L497.7 204.1 L497.0 203.4 L495.9 203.2 L497.1 206.9 L493.9 210.3 L490.2 213.2 L486.5 215.9 L482.6 218.5 L478.8 221.0 L474.9 223.6 L471.1 226.2 L467.2 228.7 L463.3 231.3 L459.5 233.9Z" fill="#000"/>
</mask>
<mask id="m4" maskUnits="userSpaceOnUse" x="0" y="0" width="820" height="562"><path d="M453.8 379.3 L462.0 368.0 L471.2 355.9 L490.0 355.0 L506.0 355.9 L509.0 351.3 L509.0 337.7 L515.0 328.6 L528.6 327.1 L535.0 328.6 L544.0 322.6 L553.0 318.5 L562.2 316.5 L571.3 322.6 L577.3 331.7 L550.1 336.2 L580.4 334.7 L589.4 340.7 L598.5 352.8 L560.7 349.0 L606.1 358.9 L610.6 369.5 L615.2 383.1 L584.9 370.2 L606.1 390.6 L610.6 412.1 L601.5 431.8 L601.0 453.8 L596.0 468.0 L589.1 479.1 L583.5 450.6 L585.1 480.7 L578.8 487.9 L568.0 485.0 L566.1 483.9 L564.5 452.2 L564.5 477.6 L562.9 494.2 L552.0 488.0 L544.7 482.3 L548.7 455.4 L537.6 485.5 L532.0 480.0 L528.0 474.0 L538.0 440.0 L526.5 482.3 L515.0 477.0 L501.9 466.5 L521.2 423.0 L494.8 461.7 L484.0 450.0 L475.7 442.4 L506.0 405.3 L471.9 440.9 L466.6 427.2 L465.1 412.1 L459.1 408.3 L474.2 397.0 L493.9 387.6 L472.7 380.0Z" fill="#fff"/>
<ellipse cx="552.5" cy="411.5" rx="1.8" ry="2.6" transform="rotate(30 552.5 411.5)" fill="#000"/>
<ellipse cx="569.5" cy="396.5" rx="1.8" ry="2.6" transform="rotate(20 569.5 396.5)" fill="#000"/>
<ellipse cx="508.2" cy="374.8" rx="3.6" ry="1.9" transform="rotate(-20 508.2 374.8)" fill="#000"/>
<ellipse cx="517.2" cy="390.6" rx="1.9" ry="4.6" transform="rotate(30 517.2 390.6)" fill="#000"/>
<ellipse cx="541.8" cy="358.5" rx="4.8" ry="2.4" transform="rotate(-25 541.8 358.5)" fill="#000"/>
<ellipse cx="537" cy="337" rx="1.8" ry="1.8" transform="rotate(0 537 337)" fill="#000"/>
<ellipse cx="557.6" cy="371" rx="5.4" ry="1.5" transform="rotate(0 557.6 371)" fill="#000"/>
<ellipse cx="538" cy="393" rx="1.8" ry="4" transform="rotate(30 538 393)" fill="#000"/>
<ellipse cx="546.3" cy="406" rx="1.8" ry="5.8" transform="rotate(30 546.3 406)" fill="#000"/>
<ellipse cx="563.7" cy="428.7" rx="1.8" ry="4.8" transform="rotate(25 563.7 428.7)" fill="#000"/>
<ellipse cx="588.7" cy="407.6" rx="2.2" ry="10.5" transform="rotate(-15 588.7 407.6)" fill="#000"/>
<path d="M516.5 353.5 L526.0 342.0 L536.0 332.5 L541.5 332.0 L540.0 337.0 L530.0 347.0 L520.0 356.0Z" fill="#000"/>
<path d="M582.6 335.4 L579.5 335.8 L576.3 336.2 L573.2 336.6 L570.0 337.0 L566.9 337.4 L563.7 337.8 L560.6 338.2 L557.4 338.4 L554.2 338.4 L550.9 338.0 L549.6 334.9 L549.1 335.6 L549.0 336.5 L549.3 337.3 L550.0 337.9 L550.4 334.6 L553.5 333.2 L556.5 332.4 L559.7 331.8 L562.8 331.3 L566.0 330.8 L569.1 330.3 L572.2 329.9 L575.4 329.4 L578.5 328.9 L581.7 328.5Z" fill="#000"/>
<path d="M603.9 358.3 L599.5 357.7 L595.2 357.2 L590.9 356.7 L586.5 356.2 L582.2 355.7 L577.8 355.1 L573.5 354.6 L569.2 353.9 L564.9 353.0 L560.6 351.5 L560.1 348.0 L559.3 348.6 L559.0 349.5 L559.1 350.4 L559.7 351.2 L561.0 347.9 L565.5 347.3 L569.9 347.4 L574.2 347.6 L578.6 348.1 L582.9 348.5 L587.3 349.0 L591.7 349.4 L596.0 349.8 L600.4 350.3 L604.7 350.7Z" fill="#000"/>
<path d="M613.9 392.1 L610.8 390.3 L607.7 388.5 L604.6 386.8 L601.5 385.0 L598.4 383.2 L595.3 381.5 L592.2 379.7 L589.2 377.8 L586.4 375.6 L583.8 372.9 L584.8 368.9 L583.7 369.2 L583.0 370.0 L582.7 371.1 L583.0 372.1 L585.9 369.1 L589.6 369.9 L592.9 371.1 L596.2 372.6 L599.3 374.3 L602.4 376.0 L605.6 377.7 L608.7 379.3 L611.9 381.0 L615.0 382.7 L618.2 384.4Z" fill="#000"/>
<path d="M585.4 483.7 L585.0 480.5 L584.7 477.3 L584.3 474.1 L584.0 470.9 L583.6 467.7 L583.2 464.6 L582.9 461.4 L582.6 458.2 L582.5 454.9 L582.6 451.7 L584.4 451.0 L584.0 450.7 L583.5 450.6 L583.0 450.8 L582.7 451.2 L584.6 451.5 L585.5 454.6 L586.1 457.7 L586.6 460.9 L587.0 464.1 L587.4 467.3 L587.8 470.5 L588.2 473.7 L588.6 476.8 L589.0 480.0 L589.4 483.2Z" fill="#000"/>
<path d="M563.3 484.7 L563.2 481.6 L563.1 478.4 L563.0 475.3 L563.0 472.2 L562.9 469.0 L562.8 465.9 L562.7 462.8 L562.7 459.7 L562.9 456.5 L563.4 453.4 L565.5 452.7 L565.1 452.3 L564.5 452.2 L563.9 452.4 L563.5 452.8 L565.7 453.3 L566.4 456.4 L566.8 459.5 L567.0 462.6 L567.2 465.8 L567.3 468.9 L567.4 472.0 L567.6 475.2 L567.7 478.3 L567.8 481.4 L568.0 484.5Z" fill="#000"/>
<path d="M537.2 487.0 L538.0 483.9 L538.9 480.8 L539.8 477.7 L540.6 474.6 L541.5 471.5 L542.4 468.5 L543.2 465.4 L544.2 462.3 L545.4 459.3 L547.0 456.4 L549.7 456.4 L549.3 455.7 L548.7 455.4 L548.0 455.4 L547.3 455.7 L549.7 457.1 L549.6 460.4 L549.1 463.6 L548.4 466.8 L547.6 469.9 L546.8 473.0 L546.0 476.1 L545.2 479.2 L544.4 482.3 L543.6 485.4 L542.8 488.5Z" fill="#000"/>
<path d="M524.9 479.7 L526.0 475.8 L527.2 471.9 L528.3 467.9 L529.4 464.0 L530.6 460.1 L531.7 456.1 L532.9 452.2 L534.1 448.3 L535.4 444.4 L536.9 440.6 L538.6 440.6 L538.4 440.2 L538.0 440.0 L537.6 440.0 L537.2 440.2 L538.6 441.0 L537.9 445.1 L537.0 449.1 L536.0 453.1 L534.9 457.0 L533.8 461.0 L532.7 464.9 L531.6 468.9 L530.5 472.8 L529.4 476.7 L528.3 480.7Z" fill="#000"/>
<path d="M491.6 465.8 L494.1 461.5 L496.6 457.2 L499.1 453.0 L501.5 448.7 L504.0 444.4 L506.5 440.1 L509.0 435.8 L511.7 431.6 L514.6 427.5 L518.1 423.8 L522.4 424.9 L522.1 423.8 L521.2 423.0 L520.1 422.7 L518.9 423.0 L522.1 426.1 L520.7 431.0 L518.7 435.6 L516.5 440.0 L514.1 444.4 L511.7 448.7 L509.3 453.1 L506.9 457.4 L504.5 461.7 L502.1 466.1 L499.7 470.4Z" fill="#000"/>
<path d="M466.2 442.3 L469.7 438.5 L473.1 434.6 L476.6 430.8 L480.1 427.0 L483.5 423.2 L487.0 419.4 L490.4 415.5 L494.1 411.9 L497.9 408.4 L502.4 405.5 L506.8 407.7 L506.8 406.4 L506.0 405.3 L504.8 404.7 L503.5 404.8 L506.3 408.9 L503.9 413.7 L500.9 417.9 L497.7 422.0 L494.3 425.9 L491.0 429.8 L487.6 433.7 L484.2 437.6 L480.9 441.5 L477.5 445.4 L474.1 449.3Z" fill="#000"/>
</mask>
</defs>
<!-- ===== leaves ===== -->
<g mask="url(#m1)"><g filter="url(#soft)">
<rect x="114.9" y="149.8" width="124.29999999999998" height="111.89999999999998" fill="#74a03c"/>
<g filter="url(#bl)">
<ellipse cx="128" cy="222" rx="10" ry="14" fill="#44791f" opacity="1.0"/>
<ellipse cx="150" cy="170" rx="18" ry="10" fill="#9cbd62" opacity="0.8"/>
<ellipse cx="200" cy="180" rx="20" ry="12" fill="#98b862" opacity="0.7"/>
<ellipse cx="195" cy="232" rx="16" ry="12" fill="#638f30" opacity="0.8"/>
<ellipse cx="160" cy="240" rx="10" ry="12" fill="#6f9a38" opacity="0.7"/>
<ellipse cx="175" cy="195" rx="10" ry="8" fill="#a8c472" opacity="0.6"/>
</g>
<rect x="114.9" y="149.8" width="124.29999999999998" height="111.89999999999998" filter="url(#tex)" opacity="0.35"/>
<rect x="114.9" y="149.8" width="124.29999999999998" height="111.89999999999998" filter="url(#tex2)" opacity="0.12"/>
<g filter="url(#bl3)" stroke="#cfe39c" stroke-width="1.8" opacity="0.5" fill="none">
<path d="M143 224 Q167.3 193.4 200 172"/>
<path d="M150 215 Q139.7 198.7 135 180"/>
<path d="M155 205 Q153.7 181.1 160 158"/>
<path d="M168 195 Q176.2 175.7 190 160"/>
<path d="M175 190 Q199.1 176.9 226 172"/>
<path d="M182 190 Q206.7 184.0 232 186"/>
<path d="M188 195 Q209.6 195.1 230 202"/>
<path d="M190 205 Q208.6 205.6 226 212"/>
<path d="M180 210 Q199.6 217.1 216 230"/>
<path d="M170 215 Q187.1 229.2 199 248"/>
<path d="M158 220 Q170.9 236.4 178 256"/>
<path d="M150 225 Q157.1 240.8 159 258"/>
</g></g></g>
<g mask="url(#m2)"><g filter="url(#soft)">
<rect x="127.30000000000001" y="260.9" width="109.6" height="105.5" fill="#82aa4a"/>
<g filter="url(#bl)">
<ellipse cx="142" cy="318" rx="10" ry="14" fill="#5c8d30" opacity="0.9"/>
<ellipse cx="178" cy="288" rx="16" ry="10" fill="#aec972" opacity="0.8"/>
<ellipse cx="205" cy="348" rx="14" ry="12" fill="#6f9c3c" opacity="0.7"/>
<ellipse cx="218" cy="305" rx="12" ry="10" fill="#a2c068" opacity="0.7"/>
</g>
<rect x="127.30000000000001" y="260.9" width="109.6" height="105.5" filter="url(#tex)" opacity="0.35"/>
<rect x="127.30000000000001" y="260.9" width="109.6" height="105.5" filter="url(#tex2)" opacity="0.12"/>
<g filter="url(#bl3)" stroke="#cfe39c" stroke-width="1.8" opacity="0.5" fill="none">
<path d="M160 293 Q190.9 309.6 215 335"/>
<path d="M165 298 Q158.2 287.3 155 275"/>
<path d="M175 303 Q182.2 283.9 195 268"/>
<path d="M185 310 Q195.2 293.5 210 281"/>
<path d="M195 318 Q210.2 307.4 228 302"/>
<path d="M205 325 Q219.8 327.8 233 335"/>
<path d="M210 332 Q219.6 343.8 225 358"/>
<path d="M200 330 Q205.1 346.1 205 363"/>
<path d="M185 322 Q188.0 341.0 185 360"/>
<path d="M172 312 Q163.6 330.3 150 345"/>
<path d="M165 300 Q148.9 302.1 133 299"/>
</g></g></g>
<g mask="url(#m3)"><g filter="url(#soft)">
<rect x="456.3" y="114" width="157.09999999999997" height="160" fill="#88ab48"/>
<g filter="url(#bl)">
<ellipse cx="492" cy="140" rx="22" ry="9" fill="#5e8c30" opacity="0.95"/>
<ellipse cx="470" cy="200" rx="14" ry="22" fill="#62922f" opacity="0.85"/>
<ellipse cx="478" cy="250" rx="16" ry="12" fill="#6a9636" opacity="0.8"/>
<ellipse cx="560" cy="212" rx="16" ry="24" fill="#b4cd8a" opacity="0.9"/>
<ellipse cx="597" cy="185" rx="12" ry="20" fill="#a3c06e" opacity="0.75"/>
<ellipse cx="518" cy="258" rx="18" ry="12" fill="#76a140" opacity="0.7"/>
<ellipse cx="550" cy="128" rx="8" ry="12" fill="#7ea645" opacity="0.6"/>
</g>
<rect x="456.3" y="114" width="157.09999999999997" height="160" filter="url(#tex)" opacity="0.35"/>
<rect x="456.3" y="114" width="157.09999999999997" height="160" filter="url(#tex2)" opacity="0.12"/>
<g filter="url(#bl3)" stroke="#cfe39c" stroke-width="1.8" opacity="0.5" fill="none">
<path d="M468 258 Q506.2 215.0 556 186"/>
<path d="M556 186 Q548.7 153.3 552 120"/>
<path d="M556 186 Q572.3 166.0 594 152"/>
<path d="M545 195 Q576.5 190.0 608 195"/>
<path d="M535 205 Q560.7 215.2 582 233"/>
<path d="M525 212 Q540.5 235.2 548 262"/>
<path d="M512 222 Q510.8 246.8 502 270"/>
<path d="M500 232 Q484.3 242.7 466 248"/>
<path d="M490 240 Q474.2 234.3 461 224"/>
<path d="M515 180 Q498.3 165.2 487 146"/>
<path d="M530 165 Q499.6 167.3 470 160"/>
</g></g></g>
<g mask="url(#m4)"><g filter="url(#soft)">
<rect x="450.8" y="313.5" width="167.40000000000003" height="183.7" fill="#8ab24c"/>
<g filter="url(#bl)">
<ellipse cx="524" cy="338" rx="16" ry="12" fill="#4a7d24" opacity="1.0"/>
<ellipse cx="515" cy="345" rx="8" ry="8" fill="#558829" opacity="0.9"/>
<ellipse cx="478" cy="390" rx="26" ry="20" fill="#689836" opacity="0.95"/>
<ellipse cx="505" cy="440" rx="16" ry="16" fill="#6c9c3a" opacity="0.8"/>
<ellipse cx="540" cy="455" rx="10" ry="14" fill="#74a23f" opacity="0.6"/>
<ellipse cx="578" cy="440" rx="18" ry="30" fill="#bfd98a" opacity="0.85"/>
<ellipse cx="576" cy="470" rx="10" ry="16" fill="#d4e89e" opacity="1.0"/>
<ellipse cx="560" cy="410" rx="10" ry="14" fill="#b0cf78" opacity="0.6"/>
<ellipse cx="598" cy="370" rx="12" ry="14" fill="#8fb956" opacity="0.6"/>
<ellipse cx="540" cy="470" rx="12" ry="12" fill="#9dc363" opacity="0.6"/>
</g>
<rect x="450.8" y="313.5" width="167.40000000000003" height="183.7" filter="url(#tex)" opacity="0.35"/>
<rect x="450.8" y="313.5" width="167.40000000000003" height="183.7" filter="url(#tex2)" opacity="0.12"/>
<g filter="url(#bl3)" stroke="#cfe39c" stroke-width="1.8" opacity="0.5" fill="none">
<path d="M520 348 Q565.8 403.2 592 470"/>
<path d="M525 352 Q540.8 332.0 562 318"/>
<path d="M540 365 Q568.0 354.4 598 353"/>
<path d="M555 385 Q584.3 379.3 614 383"/>
<path d="M565 410 Q587.1 416.7 606 430"/>
<path d="M575 440 Q584.7 459.0 588 480"/>
<path d="M560 420 Q568.1 454.6 565 490"/>
<path d="M545 410 Q548.5 447.9 540 485"/>
<path d="M535 395 Q537.8 438.1 527 480"/>
<path d="M520 385 Q514.7 425.3 497 462"/>
<path d="M508 370 Q495.6 407.9 472 440"/>
<path d="M500 365 Q478.7 376.1 455 380"/>
</g></g></g>
</svg>

</div>
</body></html>
